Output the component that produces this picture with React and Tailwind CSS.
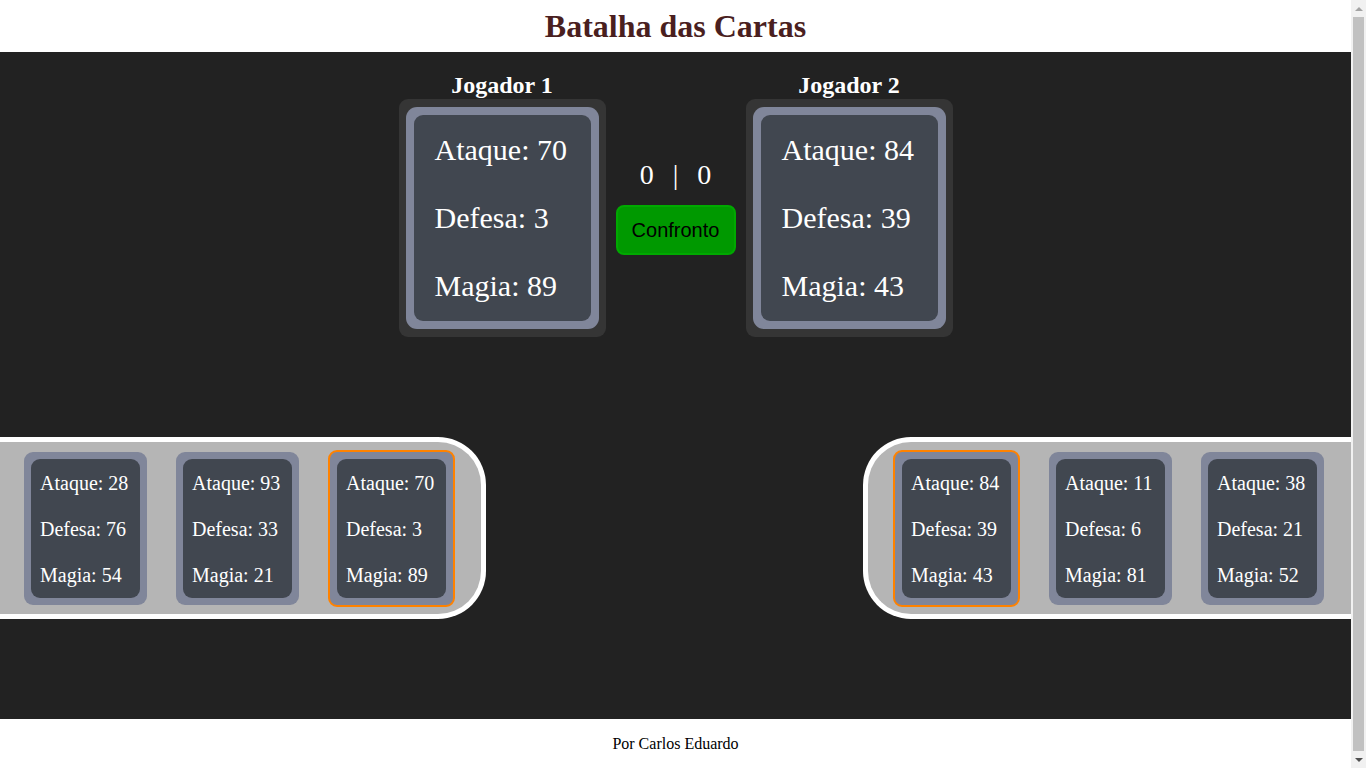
/* Batalha das Cartas — mesa de jogo */

const serif = { fontFamily: '"Liberation Serif", "Times New Roman", serif' };

const maoJogador1 = [
  { ataque: 28, defesa: 76, magia: 54 },
  { ataque: 93, defesa: 33, magia: 21 },
  { ataque: 70, defesa: 3, magia: 89, selecionada: true },
];

const maoJogador2 = [
  { ataque: 84, defesa: 39, magia: 43, selecionada: true },
  { ataque: 11, defesa: 6, magia: 81 },
  { ataque: 38, defesa: 21, magia: 52 },
];

function CartaGrande({ carta }) {
  return (
    <div className="bg-[#353535] rounded-[9px] px-[7px] py-2">
      <div className="bg-[#80869a] rounded-[11px] p-2">
        <div className="bg-[#414750] rounded-[9px] w-[177px] pt-[18px] pb-[18px] pl-[21px] flex flex-col gap-[34px] text-white text-[30px] leading-[34px] whitespace-nowrap">
          <p>Ataque: {carta.ataque}</p>
          <p>Defesa: {carta.defesa}</p>
          <p>Magia: {carta.magia}</p>
        </div>
      </div>
    </div>
  );
}

function CartaPequena({ carta }) {
  return (
    <div
      className={
        carta.selecionada
          ? 'bg-[#80869a] rounded-[9px] p-[7px] border-2 border-[#ff8200]'
          : 'bg-[#80869a] rounded-[9px] p-[7px]'
      }
    >
      <div className="bg-[#414750] rounded-[9px] w-[109px] pt-[12px] pb-[11px] pl-[9px] flex flex-col gap-[22px] text-white text-[20px] leading-[24px] whitespace-nowrap">
        <p>Ataque: {carta.ataque}</p>
        <p>Defesa: {carta.defesa}</p>
        <p>Magia: {carta.magia}</p>
      </div>
    </div>
  );
}

function Jogador({ nome, carta }) {
  return (
    <div className="flex flex-col items-center">
      <h2 className="text-white font-bold text-[24px] leading-[28px]">{nome}</h2>
      <CartaGrande carta={carta} />
    </div>
  );
}

// barra de rolagem da janela (a página passa um pouco da altura)
function BarraRolagem() {
  return (
    <div className="fixed top-0 right-0 h-screen w-[15px] bg-[#f1f1f1] flex flex-col items-center">
      <div className="h-[17px] flex items-center justify-center">
        <div className="w-0 h-0 border-x-[4px] border-x-transparent border-b-[4px] border-b-[#a3a3a3]" />
      </div>
      <div className="flex-1 w-[11px] bg-[#c1c1c1]" />
      <div className="h-[17px] flex items-center justify-center">
        <div className="w-0 h-0 border-x-[4px] border-x-transparent border-t-[4px] border-t-[#505050]" />
      </div>
    </div>
  );
}

export default function App() {
  return (
    <div style={serif} className="w-[1351px] min-h-[772px] flex flex-col">
      <header className="h-[52px] bg-white flex items-center justify-center">
        <h1 className="text-[32px] font-bold text-[#4a1f1f] leading-none">Batalha das Cartas</h1>
      </header>

      <main className="bg-[#222222] pt-[19px] pb-[100px]">
        <div className="flex justify-center items-center">
          <Jogador nome="Jogador 1" carta={maoJogador1[2]} />

          <div className="w-[140px] flex flex-col items-center pt-[6px]">
            <div className="flex gap-[19px] text-white text-[28px] leading-[32px]">
              <span>0</span>
              <span>|</span>
              <span>0</span>
            </div>
            <button
              className="mt-[14px] w-[120px] h-[50px] bg-[#009900] border-2 border-[#00a900] rounded-[8px] text-black text-[20px]"
              style={{ fontFamily: '"Liberation Sans", Arial, sans-serif' }}
            >
              Confronto
            </button>
          </div>

          <Jogador nome="Jogador 2" carta={maoJogador2[0]} />
        </div>

        <div className="mt-[100px] flex justify-between items-center">
          <div className="w-[486px] h-[182px] bg-[#b5b5b5] border-y-[5px] border-r-[5px] border-white rounded-r-[48px] pl-6 flex items-center gap-[29px]">
            {maoJogador1.map((c, i) => (
              <CartaPequena key={i} carta={c} />
            ))}
          </div>
          <div className="w-[488px] h-[182px] bg-[#b5b5b5] border-y-[5px] border-l-[5px] border-white rounded-l-[48px] pl-[25px] flex items-center gap-[29px]">
            {maoJogador2.map((c, i) => (
              <CartaPequena key={i} carta={c} />
            ))}
          </div>
        </div>
      </main>

      <footer className="h-[50px] bg-white flex items-center justify-center text-[16px] text-black">
        Por Carlos Eduardo
      </footer>

      <BarraRolagem />
    </div>
  );
}
